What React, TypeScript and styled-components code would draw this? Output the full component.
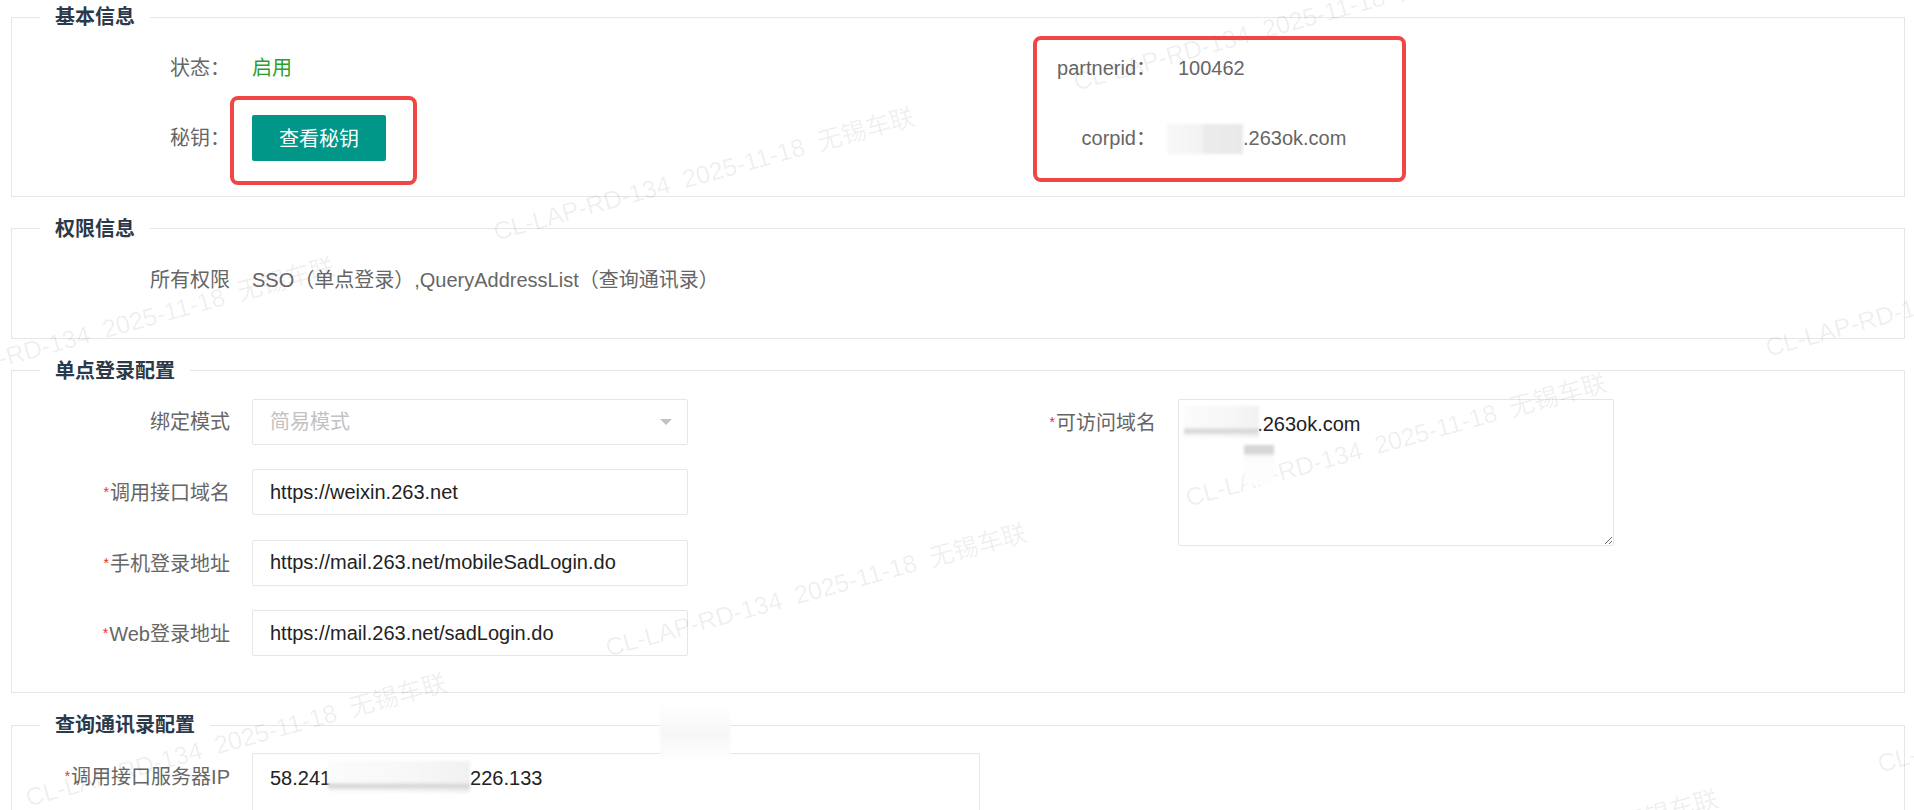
import React from "react";
import styled, { createGlobalStyle } from "styled-components";

const FONT = `"Liberation Sans", "Noto Sans CJK SC", sans-serif`;

const GlobalStyle = createGlobalStyle`
  html, body {
    margin: 0;
    padding: 0;
    background: #fff;
    overflow: hidden;
  }
  body {
    font-family: ${FONT};
    font-size: 20px;
    color: #666;
  }
`;

const Page = styled.div`
  position: relative;
  box-sizing: border-box;
  height: 810px;
  overflow: hidden;
  padding: 5px 9px 0 11px;
  display: flex;
  flex-direction: column;
  gap: 20px;
`;

const Fieldset = styled.fieldset`
  margin: 0;
  padding: 16px 0 35px;
  border: 1px solid #e6e6e6;
  min-width: 0;
`;

const Legend = styled.legend`
  margin-left: 28px;
  padding: 0 15px;
  font-size: 20px;
  line-height: 24px;
  font-weight: 700;
  color: #2b394a;
`;

const FormGrid = styled.div`
  display: grid;
  grid-template-columns: 218px 436px 446px 436px;
  grid-auto-rows: minmax(46px, auto);
  column-gap: 22px;
  row-gap: 23.6px;
`;

const Label = styled.label<{ $col?: number }>`
  position: relative;
  grid-column: ${(p) => p.$col ?? 1};
  align-self: start;
  line-height: 46px;
  text-align: right;
  white-space: nowrap;
  color: #666;
`;

const Req = styled.i`
  font-style: normal;
  font-size: 14px;
  color: #f02b2b;
  vertical-align: 3px;
  margin-right: 1px;
`;

const Value = styled.div<{ $col?: string; $tone?: "ok" }>`
  grid-column: ${(p) => p.$col ?? "2"};
  line-height: 46px;
  white-space: nowrap;
  color: ${(p) => (p.$tone === "ok" ? "#2ca02c" : "#666")};
`;

const Masked = styled.span<{ $w: number }>`
  display: inline-block;
  vertical-align: middle;
  width: ${(p) => p.$w}px;
  height: 30px;
  margin-left: -11px;
  background: linear-gradient(90deg, #f7f7f7 0%, #f3f3f3 45%, #ebebeb 50%, #e9e9e9 100%);
  filter: blur(1.5px);
`;

const Marked = styled.div`
  position: relative;
  grid-column: 2;
  justify-self: start;
  align-self: start;
`;

// red annotation frame drawn over a block
const MarkFrame = styled.span<{ $inset: string }>`
  position: absolute;
  z-index: 3;
  inset: ${(p) => p.$inset};
  border: 4px solid #f04646;
  border-radius: 8px;
  pointer-events: none;
`;

const KeyButton = styled.button`
  display: block;
  height: 46px;
  padding: 0 27px;
  border: 0;
  border-radius: 2px;
  background: #009688;
  color: #fff;
  font: 20px ${FONT};
  cursor: pointer;
`;

const SelectBox = styled.div`
  position: relative;
  grid-column: 2;
  box-sizing: border-box;
  height: 46px;
  padding: 0 17px;
  border: 1px solid #e6e6e6;
  border-radius: 2px;
  background: #fff;
  color: #c2c2c2;
  line-height: 44px;
  cursor: not-allowed;

  &::after {
    content: "";
    position: absolute;
    right: 15px;
    top: 50%;
    margin-top: -3px;
    border: 6px solid transparent;
    border-top-color: #c2c2c2;
    border-bottom-width: 0;
  }
`;

const TextInput = styled.input`
  grid-column: 2;
  box-sizing: border-box;
  width: 436px;
  height: 46px;
  padding: 0 17px;
  border: 1px solid #e6e6e6;
  border-radius: 2px;
  background: #fff;
  color: #222;
  font: 20px ${FONT};
  outline: none;
`;

const FieldWrap = styled.div<{ $col: string; $row?: string }>`
  position: relative;
  grid-column: ${(p) => p.$col};
  grid-row: ${(p) => p.$row ?? "auto"};
  justify-self: start;
  align-self: start;
`;

const TextArea = styled.textarea<{ $w: number; $h: number }>`
  display: block;
  box-sizing: border-box;
  width: ${(p) => p.$w}px;
  height: ${(p) => p.$h}px;
  padding: 12px 17px;
  border: 1px solid #e6e6e6;
  border-radius: 2px;
  background: #fff;
  color: #222;
  font: 20px/24px ${FONT};
  outline: none;
  resize: both;
`;

type RedactKind = "under" | "cap" | "faint";

const redactFill: Record<RedactKind, string> = {
  under:
    "linear-gradient(180deg, transparent 0 68%, #d9d9d9 72% 84%, transparent 90%), linear-gradient(90deg, #fbfbfb 0%, #f7f7f7 60%, #f1f1f1 100%)",
  cap: "linear-gradient(180deg, #d6d6d6 0 20%, #fbfbfb 28%, #fefefe 100%)",
  faint: "linear-gradient(180deg, #fff 0%, #f6f6f6 50%, #fff 100%)",
};

const Redact = styled.span<{ $left: number; $top: number; $w: number; $h: number; $kind: RedactKind }>`
  position: absolute;
  z-index: 2;
  left: ${(p) => p.$left}px;
  top: ${(p) => p.$top}px;
  width: ${(p) => p.$w}px;
  height: ${(p) => p.$h}px;
  background: ${(p) => redactFill[p.$kind]};
  filter: blur(1.5px);
  pointer-events: none;
`;

const WatermarkLayer = styled.div`
  position: absolute;
  inset: 0;
  z-index: 1;
  overflow: hidden;
  pointer-events: none;
`;

const WatermarkText = styled.span`
  position: absolute;
  white-space: pre;
  font: 25px/24px ${FONT};
  color: rgba(0, 0, 0, 0.07);
  transform-origin: 0 50%;
  transform: rotate(-15.5deg);
`;

const WATERMARK = "CL-LAP-RD-134  2025-11-18  无锡车联";

const watermarkSpots = (() => {
  const origin = [494, 232];
  const a = [692, 266];
  const b = [-580, 150];
  const spots: { x: number; y: number }[] = [];
  for (let i = -2; i <= 3; i++) {
    for (let j = -3; j <= 3; j++) {
      const x = origin[0] + i * a[0] + j * b[0];
      const y = origin[1] + i * a[1] + j * b[1];
      if (x > -460 && x < 1940 && y > -40 && y < 960) spots.push({ x, y });
    }
  }
  return spots;
})();

const App: React.FC = () => {
  return (
    <>
      <GlobalStyle />
      <Page>
        <Fieldset>
          <Legend>基本信息</Legend>
          <FormGrid>
            <Label>状态：</Label>
            <Value $tone="ok">启用</Value>
            <Label $col={3}>
              partnerid：
              <MarkFrame $inset="-9px -250px -91px 323px" />
            </Label>
            <Value $col="4">100462</Value>

            <Label>秘钥：</Label>
            <Marked>
              <KeyButton type="button">查看秘钥</KeyButton>
              <MarkFrame $inset="-19px -31px -24px -22px" />
            </Marked>
            <Label $col={3}>corpid：</Label>
            <Value $col="4">
              <Masked $w={76} />
              .263ok.com
            </Value>
          </FormGrid>
        </Fieldset>

        <Fieldset>
          <Legend>权限信息</Legend>
          <FormGrid>
            <Label>所有权限</Label>
            <Value $col="2 / 5">SSO（单点登录）,QueryAddressList（查询通讯录）</Value>
          </FormGrid>
        </Fieldset>

        <Fieldset>
          <Legend>单点登录配置</Legend>
          <FormGrid>
            <Label>绑定模式</Label>
            <SelectBox>简易模式</SelectBox>
            <Label $col={3}>
              <Req>*</Req>可访问域名
            </Label>
            <FieldWrap $col="4" $row="1 / span 3">
              <TextArea $w={436} $h={147} readOnly value={"           .263ok.com\n"} />
              <Redact $kind="under" $left={6} $top={7} $w={75} $h={32} />
              <Redact $kind="cap" $left={66} $top={46} $w={30} $h={40} />
            </FieldWrap>

            <Label>
              <Req>*</Req>调用接口域名
            </Label>
            <TextInput readOnly value="https://weixin.263.net" />

            <Label>
              <Req>*</Req>手机登录地址
            </Label>
            <TextInput readOnly value="https://mail.263.net/mobileSadLogin.do" />

            <Label>
              <Req>*</Req>Web登录地址
            </Label>
            <TextInput readOnly value="https://mail.263.net/sadLogin.do" />
          </FormGrid>
        </Fieldset>

        <Fieldset>
          <Legend>查询通讯录配置</Legend>
          <FormGrid>
            <Label>
              <Req>*</Req>调用接口服务器IP
            </Label>
            <FieldWrap $col="2 / 5">
              <TextArea $w={728} $h={130} readOnly value={"58.241                         226.133"} />
              <Redact $kind="under" $left={76} $top={8} $w={142} $h={32} />
            </FieldWrap>
          </FormGrid>
        </Fieldset>

        <Redact $kind="faint" $left={660} $top={704} $w={70} $h={60} />

        <WatermarkLayer>
          {watermarkSpots.map((s) => (
            <WatermarkText key={`${s.x}-${s.y}`} style={{ left: s.x, top: s.y - 12 }}>
              {WATERMARK}
            </WatermarkText>
          ))}
        </WatermarkLayer>
      </Page>
    </>
  );
};

export default App;
